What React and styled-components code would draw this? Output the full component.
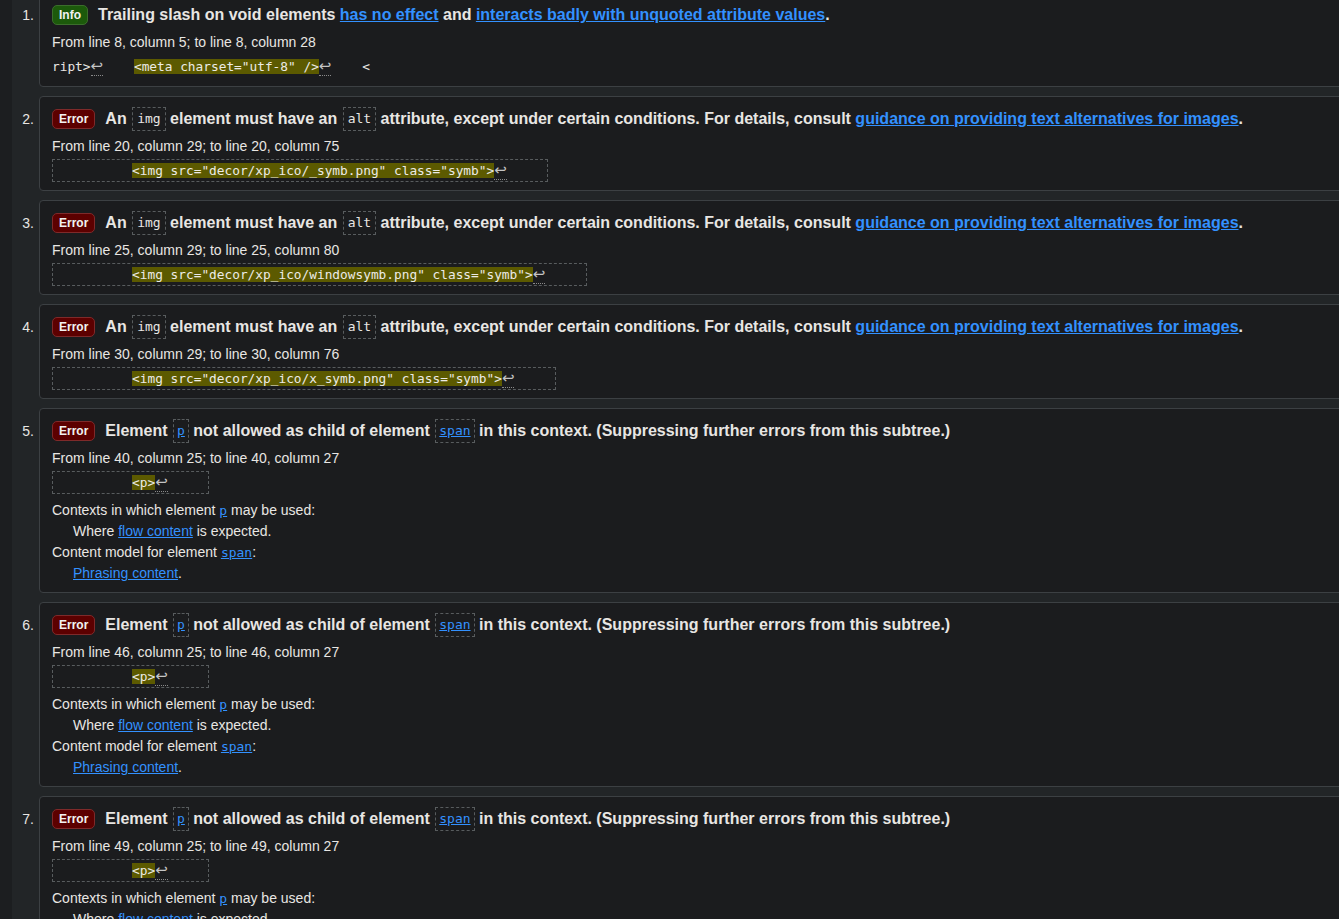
import React from 'react';
import styled, { createGlobalStyle } from 'styled-components';

const GlobalStyle = createGlobalStyle`
  html, body {
    margin: 0;
    padding: 0;
    background: #1c1e20;
    overflow: hidden;
  }
  body {
    font-family: "Liberation Sans", Arial, sans-serif;
    color: #e8e6e3;
  }
`;

const List = styled.div`
  margin: -8px -8px 0 12px;
  background: #222527;
  display: flex;
  flex-direction: column;
  gap: 9px;
  min-height: 960px;
`;

const Item = styled.div`
  display: flex;
  align-items: flex-start;
`;

const Num = styled.div`
  box-sizing: border-box;
  width: 27px;
  padding: 9px 5px 0 0;
  text-align: right;
  font-size: 14px;
  line-height: 28px;
  color: #e8e6e3;
`;

const Card = styled.div`
  flex: 1;
  min-width: 0;
  background: #1b1c1e;
  border: 1px solid #3c4043;
  border-radius: 4px;
  padding: 8px 12px 8px 12px;
`;

const Title = styled.div`
  font-size: 16px;
  font-weight: bold;
  line-height: 28px;
  height: 28px;
  white-space: nowrap;
  color: #e8e6e3;
`;

const Badge = styled.span`
  display: inline-block;
  box-sizing: border-box;
  height: 20px;
  line-height: 18px;
  padding: 0 6px;
  margin-right: 10px;
  font-size: 12px;
  font-weight: bold;
  color: #f2f2f2;
  border-radius: 5px;
  vertical-align: middle;
  position: relative;
  top: -1px;
  background: ${p => (p.kind === 'info' ? '#1c5a0b' : '#5c0000')};
  border: 1px solid ${p => (p.kind === 'info' ? '#3b6e2c' : '#7e2a2a')};
`;

const Link = styled.a`
  color: #3391ff;
  text-decoration: underline;
  cursor: pointer;
`;

const TitleCode = styled.code`
  display: inline-block;
  box-sizing: border-box;
  height: 24px;
  line-height: 22px;
  padding: 0 ${p => (p.link ? 3 : 4)}px;
  margin-left: 1px;
  border: 1px dashed #585c5e;
  font-family: "DejaVu Sans Mono", "Liberation Mono", monospace;
  font-size: 13px;
  font-weight: normal;
  vertical-align: middle;
  position: relative;
  top: -1px;
  color: ${p => (p.link ? '#3391ff' : '#e8e6e3')};
  text-decoration: ${p => (p.link ? 'underline' : 'none')};
`;

const FromLine = styled.div`
  margin-top: 3px;
  font-size: 14px;
  line-height: 20px;
  color: #e8e6e3;
`;

const CodeBox = styled.div`
  display: inline-block;
  margin-top: 3px;
  padding: ${p => (p.plain ? '0' : '0 2px')};
  border: ${p => (p.plain ? 'none' : '1px dashed #585c5e')};
  font-family: "DejaVu Sans Mono", "Liberation Mono", monospace;
  font-size: 12.8px;
  line-height: ${p => (p.plain ? 22 : 21)}px;
  white-space: pre;
  color: #e8e6e3;
`;

const Hl = styled.span`
  background: #5c5a00;
  color: #ecebe6;
`;

const Ret = styled.span`
  font-family: "DejaVu Sans", sans-serif;
  font-size: 15px;
  color: #c4c4c4;
  border-bottom: 1px dotted #8a8a8a;
`;

const Notes = styled.div`
  margin-top: 6px;
  font-size: 14px;
  line-height: 21px;
  color: #e8e6e3;
`;

const Indent = styled.div`
  padding-left: 21px;
`;

const MonoLink = styled(Link)`
  font-family: "DejaVu Sans Mono", "Liberation Mono", monospace;
  font-size: 13px;
`;

const imgMsg = [
  { n: 2, line: 20, from: 29, to: 75, src: 'decor/xp_ico/_symb.png' },
  { n: 3, line: 25, from: 29, to: 80, src: 'decor/xp_ico/windowsymb.png' },
  { n: 4, line: 30, from: 29, to: 76, src: 'decor/xp_ico/x_symb.png' },
];

const pMsg = [
  { n: 5, line: 40 },
  { n: 6, line: 46 },
  { n: 7, line: 49 },
];

const pad = n => ' '.repeat(n);

function App() {
  return (
    <>
      <GlobalStyle />
      <List>
        <Item>
          <Num>1.</Num>
          <Card>
            <Title>
              <Badge kind="info">Info</Badge>
              Trailing slash on void elements <Link>has no effect</Link> and{' '}
              <Link>interacts badly with unquoted attribute values</Link>.
            </Title>
            <FromLine>From line 8, column 5; to line 8, column 28</FromLine>
            <CodeBox plain>
              ript&gt;<Ret>↩</Ret>{pad(4)}<Hl>&lt;meta charset="utf-8" /&gt;</Hl><Ret>↩</Ret>{pad(4)}&lt;
            </CodeBox>
          </Card>
        </Item>

        {imgMsg.map(m => (
          <Item key={m.n}>
            <Num>{m.n}.</Num>
            <Card>
              <Title>
                <Badge kind="error">Error</Badge>
                An <TitleCode>img</TitleCode> element must have an <TitleCode>alt</TitleCode> attribute,
                except under certain conditions. For details, consult{' '}
                <Link>guidance on providing text alternatives for images</Link>.
              </Title>
              <FromLine>
                From line {m.line}, column {m.from}; to line {m.line}, column {m.to}
              </FromLine>
              <CodeBox>
                {pad(10)}<Hl>&lt;img src="{m.src}" class="symb"&gt;</Hl><Ret>↩</Ret>{pad(5)}
              </CodeBox>
            </Card>
          </Item>
        ))}

        {pMsg.map(m => (
          <Item key={m.n}>
            <Num>{m.n}.</Num>
            <Card>
              <Title>
                <Badge kind="error">Error</Badge>
                Element <TitleCode link>p</TitleCode> not allowed as child of element{' '}
                <TitleCode link>span</TitleCode> in this context. (Suppressing further errors from this subtree.)
              </Title>
              <FromLine>
                From line {m.line}, column 25; to line {m.line}, column 27
              </FromLine>
              <CodeBox>
                {pad(10)}<Hl>&lt;p&gt;</Hl><Ret>↩</Ret>{pad(5)}
              </CodeBox>
              <Notes>
                <div>
                  Contexts in which element <MonoLink>p</MonoLink> may be used:
                </div>
                <Indent>
                  Where <Link>flow content</Link> is expected.
                </Indent>
                <div>
                  Content model for element <MonoLink>span</MonoLink>:
                </div>
                <Indent>
                  <Link>Phrasing content</Link>.
                </Indent>
              </Notes>
            </Card>
          </Item>
        ))}
      </List>
    </>
  );
}

export default App;
